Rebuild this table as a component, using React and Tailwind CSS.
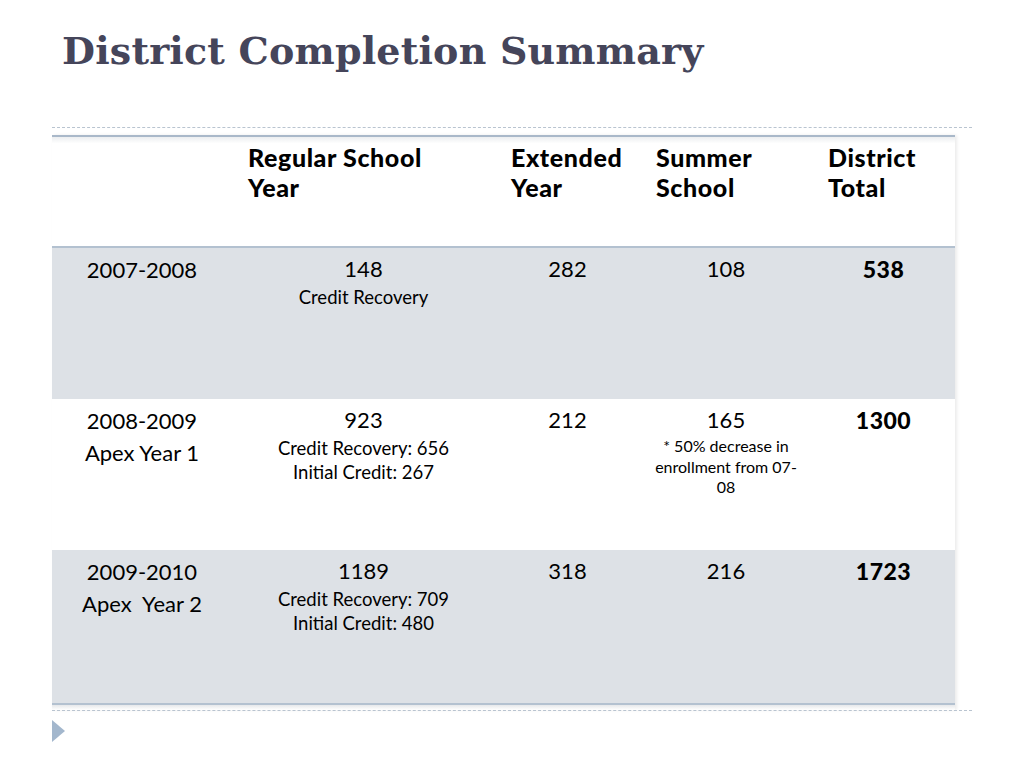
import React from "react";

const cols = "grid grid-cols-[180px_263px_145px_172px_143px]";

const rows = [
  {
    year: ["2007-2008"],
    regular: "148",
    regularNote: ["Credit Recovery"],
    extended: "282",
    summer: "108",
    summerNote: [],
    total: "538",
    bg: "bg-[#dde1e6]",
    h: "h-[151px]",
  },
  {
    year: ["2008-2009", "Apex Year 1"],
    regular: "923",
    regularNote: ["Credit Recovery: 656", "Initial Credit: 267"],
    extended: "212",
    summer: "165",
    summerNote: ["* 50% decrease in", "enrollment from 07-", "08"],
    total: "1300",
    bg: "bg-white",
    h: "h-[151px]",
  },
  {
    year: ["2009-2010", "Apex\u00a0 Year 2"],
    regular: "1189",
    regularNote: ["Credit Recovery: 709", "Initial Credit: 480"],
    extended: "318",
    summer: "216",
    summerNote: [],
    total: "1723",
    bg: "bg-[#dde1e6]",
    h: "h-[153px]",
  },
];

const App = () => {
  return (
    <div className="w-[1024px] h-[768px] bg-white overflow-hidden font-['Lato',sans-serif] text-black">
      <h1 className="pl-[62px] pt-[27px] h-[127px] text-[38px] leading-[48px] font-bold text-[#45455a] font-['DejaVu_Serif',serif] tracking-[0.2px]">
        District Completion Summary
      </h1>
      <div className="ml-[52px] w-[920px] border-t border-dashed border-[#b9c4d0]"></div>
      <div className="ml-[52px] mt-[7px] w-[903px] shadow-[2px_0_3px_rgba(0,0,0,0.08)]">
        <div className="border-t-2 border-[#a9b8c9]"></div>
        <div className={`${cols} h-[109px] bg-white bg-gradient-to-b from-[#eceef0] via-white via-[6%] to-white`}>
          <div></div>
          {[
            ["Regular School", "Year"],
            ["Extended", "Year"],
            ["Summer", "School"],
            ["District", "Total"],
          ].map((h, i) => (
            <div key={i} className="pl-[16px] pt-[5px] text-[25px] leading-[30px] font-black tracking-[0.6px] whitespace-nowrap">
              {h[0]}
              <br />
              {h[1]}
            </div>
          ))}
        </div>
        <div className="border-t-2 border-[#b3c1d0]"></div>
        {rows.map((r, i) => (
          <div key={i} className={`${cols} ${r.h} ${r.bg} text-center`}>
            <div className="pt-[6px] text-[22px] leading-[32px]">
              {r.year.map((y, j) => (
                <div key={j}>{y}</div>
              ))}
            </div>
            <div className="pt-[6px]">
              <div className="text-[22px] leading-[30px]">{r.regular}</div>
              <div className="text-[18.5px] leading-[24px] mt-[1px]">
                {r.regularNote.map((n, j) => (
                  <div key={j}>{n}</div>
                ))}
              </div>
            </div>
            <div className="pt-[6px] text-[22px] leading-[30px]">{r.extended}</div>
            <div className="pt-[6px] px-[8px]">
              <div className="text-[22px] leading-[30px]">{r.summer}</div>
              <div className="text-[16px] leading-[20.5px] mt-[1px]">
                {r.summerNote.map((n, j) => (
                  <div key={j}>{n}</div>
                ))}
              </div>
            </div>
            <div className="pt-[6px] text-[23px] leading-[30px] font-black tracking-[0.5px]">{r.total}</div>
          </div>
        ))}
        <div className="border-t-2 border-[#b3c1d0]"></div>
        <div className="h-[5px] bg-gradient-to-b from-[#e6e8ea] to-white"></div>
      </div>
      <div className="ml-[52px] w-[920px] border-t border-dashed border-[#b9c4d0]"></div>
      <div className="ml-[52px] mt-[9px] w-0 h-0 border-y-[11px] border-y-transparent border-l-[13px] border-l-[#a3b7cd]"></div>
    </div>
  );
};

export default App;
